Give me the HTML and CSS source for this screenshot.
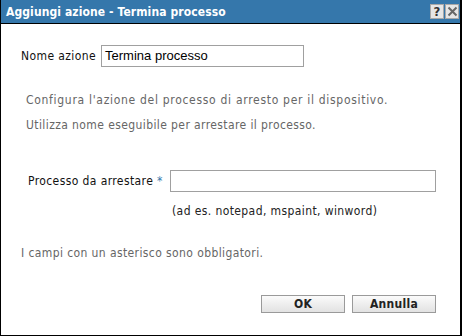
FILE: index.html
```html
<!DOCTYPE html>
<html>
<head>
<meta charset="utf-8">
<link rel="stylesheet" href="styles.css">
</head>
<body>
<div class="dialog">
  <div class="titlebar">
    <span class="title">Aggiungi azione - Termina processo</span>
    <div class="tbtns">
      <span class="tbtn">?</span>
      <span class="tbtn">
        <svg width="11" height="11" viewBox="0 0 11 11"><path d="M1.5 1.5 L9.5 9.5 M9.5 1.5 L1.5 9.5" stroke="#666" stroke-width="2"/></svg>
      </span>
    </div>
  </div>
  <div class="content">
    <div class="row name-row">
      <span class="label">Nome azione</span>
      <div class="input name-input">Termina processo</div>
    </div>
    <p class="info first">Configura l'azione del processo di arresto per il dispositivo.</p>
    <p class="info second">Utilizza nome eseguibile per arrestare il processo.</p>
    <div class="row proc-row">
      <span class="label">Processo da arrestare <span class="req">*</span></span>
      <div class="input proc-input"></div>
    </div>
    <p class="hint">(ad es. notepad, mspaint, winword)</p>
    <p class="note">I campi con un asterisco sono obbligatori.</p>
    <div class="buttons">
      <span class="btn">OK</span>
      <span class="btn">Annulla</span>
    </div>
  </div>
</div>
</body>
</html>
```
FILE: styles.css
```css
html, body {
  margin: 0;
  padding: 0;
  background: #fff;
}
.dialog {
  width: 462px;
  height: 336px;
  box-sizing: border-box;
  border-left: 1px solid #000;
  border-right: 2px solid #000;
  border-bottom: 1px solid #000;
  display: flex;
  flex-direction: column;
  font-family: "DejaVu Sans Condensed", "DejaVu Sans", sans-serif;
  font-size: 12px;
  letter-spacing: 0.4px;
}
.titlebar {
  height: 23px;
  background: #3577ab;
  border-bottom: 1px solid #000;
  display: flex;
  align-items: center;
  justify-content: space-between;
  padding: 0 1px 0 5px;
}
.title {
  color: #fff;
  font-weight: bold;
  font-size: 12px;
  letter-spacing: 0.1px;
}
.tbtns {
  display: flex;
  gap: 1px;
  align-self: flex-start;
  margin-top: 4px;
}
.tbtn {
  width: 14px;
  height: 15px;
  box-sizing: border-box;
  background: #e6e6e6;
  border: 1px solid #a8a8a8;
  display: flex;
  align-items: center;
  justify-content: center;
  font-weight: bold;
  font-size: 13px;
  letter-spacing: 0;
  color: #333;
}
.content {
  flex: 1;
  display: flex;
  flex-direction: column;
  padding: 0 0 0 20px;
}
.row {
  display: flex;
  align-items: center;
}
.label {
  color: #111;
}
.req {
  color: #3577ab;
}
.input {
  box-sizing: border-box;
  border: 1px solid #a0a0a0;
  height: 22px;
  font-family: "Liberation Sans", Arial, sans-serif;
  font-size: 13px;
  letter-spacing: 0;
  color: #000;
  padding: 1px 3px;
  line-height: 18px;
}
.name-row {
  margin-top: 21px;
}
.name-input {
  width: 203px;
  margin-left: 5px;
}
.info {
  margin: 0;
  color: #666;
  padding-left: 5px;
}
.info.first {
  margin-top: 26px;
  letter-spacing: 0.7px;
}
.info.second {
  margin-top: 11px;
}
.proc-row {
  margin-top: 38px;
  padding-left: 7px;
}
.proc-input {
  width: 266px;
  margin-left: 7px;
}
.hint {
  margin: 12px 0 0 151px;
  color: #222;
}
.note {
  margin: 28px 0 0 0;
  color: #666;
}
.buttons {
  display: flex;
  gap: 7px;
  justify-content: flex-end;
  margin-top: 35px;
  margin-right: 24px;
}
.btn {
  width: 84px;
  height: 18px;
  box-sizing: border-box;
  border: 1px solid #9a9a9a;
  background: linear-gradient(#fbfbfb, #e2e2e2);
  display: flex;
  align-items: center;
  justify-content: center;
  font-weight: bold;
  font-size: 12px;
  letter-spacing: 0.3px;
  color: #222;
}
```
